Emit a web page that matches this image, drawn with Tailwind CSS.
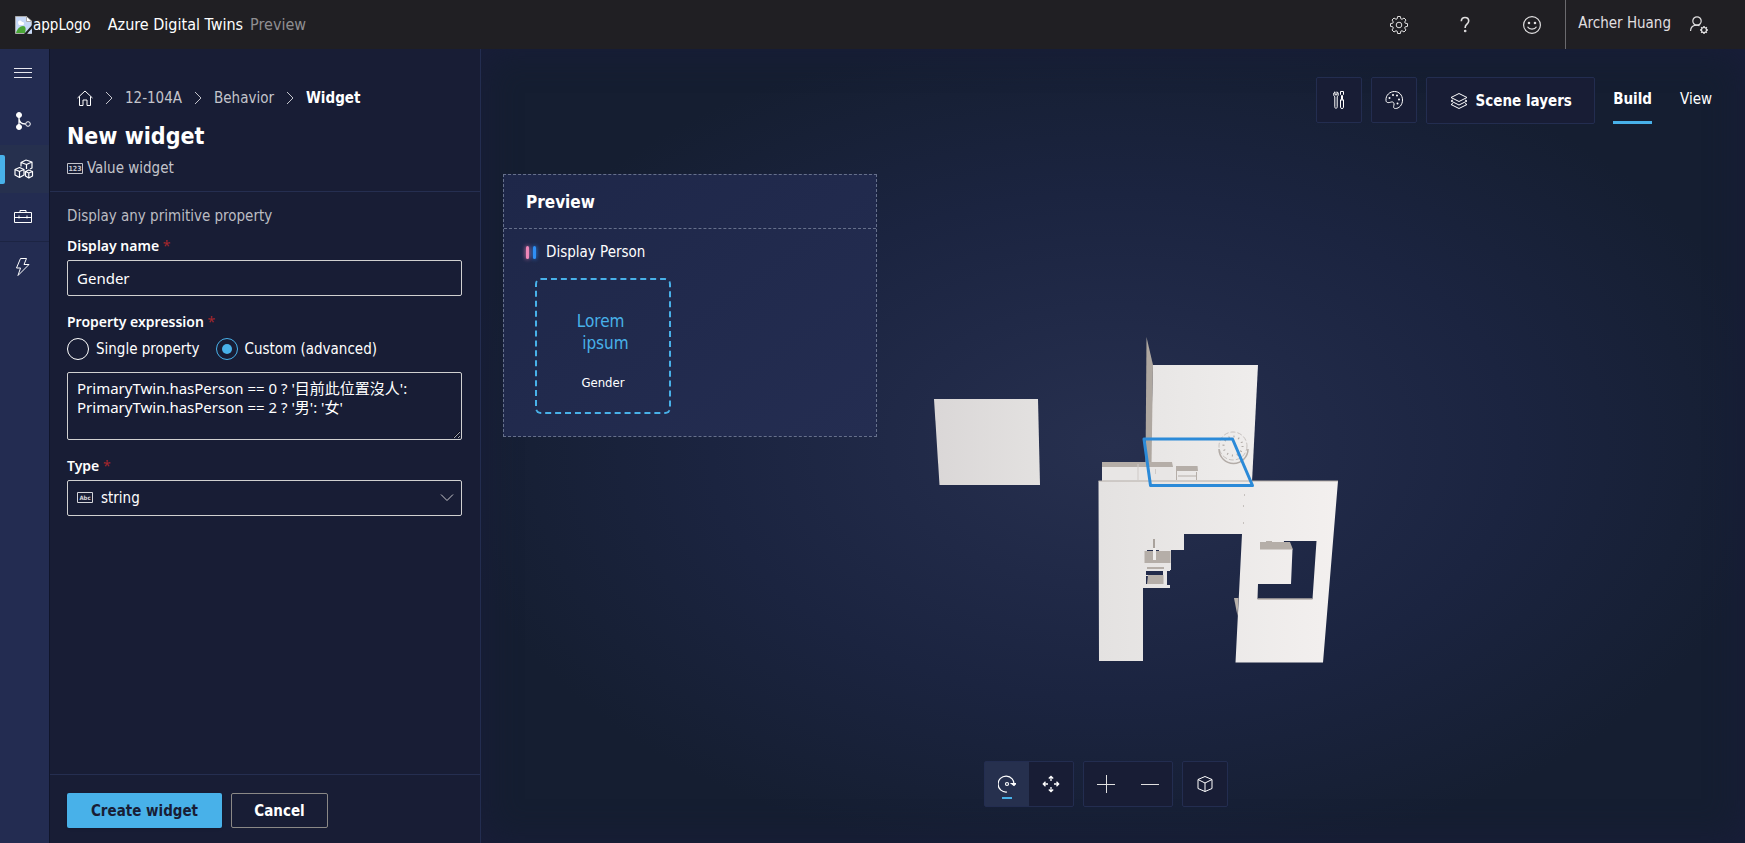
<!DOCTYPE html>
<html lang="en">
<head>
<meta charset="utf-8">
<title>Azure Digital Twins</title>
<script src="https://cdn.jsdelivr.net/npm/@tailwindcss/browser@4"></script>
</head>
<body class="flex h-screen flex-col overflow-hidden bg-[#181d35] font-['DejaVu_Sans_Condensed','Noto_Sans',sans-serif] text-[15px] leading-5 text-white">

<header class="flex h-[49px] shrink-0 items-center bg-[#201f23] pl-[15px]">
  <div class="flex items-center">
    <svg class="size-[18px]" viewBox="0 0 18 18"><path d="M.5.5h11l5 5v12H.5z" fill="#c6d8f7" stroke="#aaa"/><path d="M11.500.5v5h5.500z" fill="#fff" stroke="#aaa"/><path d="M3 7a2 2 0 0 1 4-1 1.500 1.500 0 0 1 1 3H4z" fill="#fff"/><path d="M1 17c1-4 4-7 7-7s3 3 2 7z" fill="#4aa636"/><path d="M9 18 18 8v3l-6 7z" fill="#201f23"/><path d="M13 17.500h4V13z" fill="#c6d8f7"/></svg>
    <span>appLogo</span>
  </div>
  <h1 class="ml-[17px] flex gap-[7px] text-base"><span>Azure Digital Twins</span><span class="text-[#8f8e91]">Preview</span></h1>
  <div class="ml-auto flex h-full items-center text-[#e0dfe0]">
    <button class="grid w-[66px] place-items-center" aria-label="Settings"><svg class="size-5" viewBox="0 0 20 20" fill="none" stroke="currentColor"><circle cx="10" cy="10" r="2.800"/><path d="M8.600 1.500h2.800l.4 2.300 1.200.5 2-1.300 2 2-1.300 2 .5 1.200 2.300.4v2.800l-2.300.4-.5 1.200 1.300 2-2 2-2-1.300-1.200.5-.4 2.300H8.600l-.4-2.300-1.200-.5-2 1.300-2-2 1.300-2-.5-1.200-2.300-.4V8.600l2.300-.4.5-1.200L3 5l2-2 2 1.300 1.200-.5z"/></svg></button>
    <button class="grid w-[66px] place-items-center" aria-label="Help"><svg class="size-5" viewBox="0 0 20 20" fill="none" stroke="currentColor" stroke-width="1.600"><path d="M6.300 6.200c0-2.400 1.600-3.700 3.700-3.700s3.700 1.300 3.700 3.500c0 3-3.500 3.200-3.500 6.200v.8"/><circle cx="10.200" cy="16" r=".5" fill="currentColor"/></svg></button>
    <button class="grid w-[67px] place-items-center" aria-label="Feedback"><svg class="size-5" viewBox="0 0 20 20" fill="none" stroke="currentColor" stroke-width="1.200"><circle cx="10" cy="10" r="8.400"/><path d="M5.500 11.800c1.800 3.200 7.200 3.200 9 0"/><circle cx="7" cy="8" r=".7" fill="currentColor"/><circle cx="13" cy="8" r=".7" fill="currentColor"/></svg></button>
    <button class="flex h-full items-center gap-[18px] border-l border-[#6b6a6e] pr-9 pl-3"><span class="pb-1">Archer Huang</span><svg class="size-5" viewBox="0 0 20 20" fill="none" stroke="currentColor" stroke-width="1.200"><circle cx="8" cy="6" r="4.200"/><path d="M1.500 16c.2-3.500 2.500-5.800 6.500-5.800 1 0 1.800.1 2.500.4"/><circle cx="15" cy="15" r="2.500"/><path d="M15 11v1.500M15 17.500V19M11 15h1.500M17.500 15H19M12.200 12.200l1 1M16.800 16.800l1 1M17.800 12.200l-1 1M13.200 16.800l-1 1" stroke-width="1.500"/></svg></button>
  </div>
</header>

<div class="flex min-h-0 flex-1">
  <nav class="flex w-[50px] shrink-0 flex-col border-r border-[#10152a] bg-[#232c51]" aria-label="Main">
    <button class="grid h-12 w-full place-items-center pr-[3px]" aria-label="Menu"><svg class="size-[18px]" viewBox="0 0 18 18" stroke="#e8e8ee"><path d="M0 4.500h18M0 8.500h18M0 13.500h18"/></svg></button>
    <button class="grid h-12 w-full place-items-center pr-[3px]" aria-label="Twin graph"><svg class="size-[18px]" viewBox="0 0 18 18" fill="none" stroke="#fff"><circle cx="5" cy="3" r="2.500" fill="#fff"/><circle cx="5" cy="15" r="2.500" fill="#fff"/><circle cx="14" cy="12" r="2.300"/><path d="M5 3v12M5 6c0 4 2 6 6.500 6" stroke-width="1.300"/></svg></button>
    <button class="flex h-12 w-full items-center gap-[9px] bg-[#26304e]" aria-label="3D scenes"><span class="h-[29px] w-[5px] rounded-r-xs bg-[#48b1e9]"></span><svg class="size-5" viewBox="0 0 20 20" fill="none" stroke="#fff" stroke-width="1.200" stroke-linejoin="round"><path d="m12 1 6 2v6l-2 1M12 1 7 3.500v4M7 3.500l5.500 2L18 3M12.500 5.500V10M5.500 8.500 1 10.500v5.500l4.500 2.500 4.500-2.500v-5.500zM1 10.500l4.500 2 4.500-2M5.500 12.500v6M14.800 11l-3.300 1.500v4.500l3.300 2 3.700-2v-4.500zM11.500 12.500l3.300 1.500 3.700-1.500M14.800 14v5"/></svg></button>
    <button class="grid h-[49px] w-full place-items-center border-b border-[#1c2443] pr-[3px]" aria-label="Toolbox"><svg class="size-[18px]" viewBox="0 0 18 18" fill="none" stroke="#fff"><path d="M.5 4.500h17v10H.5zM6 4.500v-2h6v2M.5 9.500h17M5 7.500v3M13 7.500v3"/></svg></button>
    <button class="grid h-[50px] w-full place-items-center pr-[3px]" aria-label="Actions"><svg class="size-[18px]" viewBox="0 0 18 18" fill="none" stroke="#fff" stroke-linejoin="round"><path d="M6.500.5h6l-2.500 6h5l-11 11 2.500-7.500H2.500z"/></svg></button>
  </nav>

  <main class="flex w-[431px] shrink-0 flex-col border-r border-[#232d50]">
    <div class="border-b border-[#252e50] px-[17px] pt-[39px] pb-[13px]">
      <nav class="flex items-center gap-3 pl-[10px] text-[#c3c4cb]" aria-label="Breadcrumb">
        <a href="#" aria-label="Home"><svg class="size-4" viewBox="0 0 16 16" fill="none" stroke="#fff" stroke-linejoin="round"><path d="M.5 8 8 1l7.500 7M2.500 6.500v9H6V10h4v5.500h3.500v-9"/></svg></a>
        <svg class="h-3 w-2" viewBox="0 0 8 12" fill="none" stroke="currentColor"><path d="m1 0 6 6-6 6"/></svg>
        <a href="#">12-104A</a>
        <svg class="h-3 w-2" viewBox="0 0 8 12" fill="none" stroke="currentColor"><path d="m1 0 6 6-6 6"/></svg>
        <a href="#">Behavior</a>
        <svg class="h-3 w-2" viewBox="0 0 8 12" fill="none" stroke="currentColor"><path d="m1 0 6 6-6 6"/></svg>
        <span class="font-bold text-white">Widget</span>
      </nav>
      <h2 class="mt-3 text-[23px] leading-8 font-bold">New widget</h2>
      <p class="mt-[6px] flex items-center gap-1 text-[#c3c4cb]"><svg class="h-[11px] w-4" viewBox="0 0 16 11" fill="none" stroke="currentColor"><path d="M.5.5h15v10H.5z"/><text x="8" y="8" text-anchor="middle" font-size="7" font-weight="700" fill="currentColor" stroke="none">123</text></svg>Value widget</p>
    </div>

    <form class="flex flex-1 flex-col pt-[14px] pr-[18px] pl-[17px]">
      <p class="text-[#bbbcc2]">Display any primitive property</p>
      <label for="name" class="mt-[10px] font-['Noto_Sans'] text-sm font-semibold">Display name <span class="font-normal text-[#a4262c]">*</span></label>
      <input id="name" value="Gender" class="mt-1 h-9 rounded-xs border border-[#d0d0d0] bg-transparent px-[9px] font-['Noto_Sans'] text-[15px] outline-none">
      <fieldset class="mt-4">
        <legend class="font-['Noto_Sans'] text-sm font-semibold">Property expression <span class="font-normal text-[#a4262c]">*</span></legend>
        <div class="mt-[6px] flex gap-4">
          <label class="flex items-center gap-[7px]"><input type="radio" name="mode" class="size-[22px] appearance-none rounded-full border border-white"><span>Single property</span></label>
          <label class="flex items-center gap-[7px]"><input type="radio" name="mode" checked class="size-[22px] appearance-none rounded-full border border-[#48b1e9] bg-[#48b1e9] bg-clip-content p-[5px]"><span>Custom (advanced)</span></label>
        </div>
      </fieldset>
      <textarea aria-label="Property expression" class="mt-3 h-[68px] rounded-xs border border-[#d0d0d0] bg-transparent px-[9px] py-[6px] font-['Noto_Sans','Noto_Sans_CJK_TC',sans-serif] text-[15px] leading-[19px] outline-none">PrimaryTwin.hasPerson == 0 ? '目前此位置沒人':
PrimaryTwin.hasPerson == 2 ? '男': '女'</textarea>
      <label for="type" class="mt-4 font-['Noto_Sans'] text-sm font-semibold">Type <span class="font-normal text-[#a4262c]">*</span></label>
      <div class="relative mt-1">
        <select id="type" class="h-9 w-full appearance-none rounded-xs border border-[#d0d0d0] bg-transparent pl-[33px] text-[15px] outline-none"><option>string</option></select>
        <svg class="pointer-events-none absolute top-3 left-[10px] h-[11px] w-4" viewBox="0 0 16 11" fill="none" stroke="#d5d5da"><path d="M.5.500h15v10H.5z"/><text x="8" y="8" text-anchor="middle" font-size="6" font-weight="700" fill="#d5d5da" stroke="none">Abc</text></svg>
        <svg class="pointer-events-none absolute top-[14px] right-2 h-2 w-[14px]" viewBox="0 0 14 8" fill="none" stroke="#c8c8cc"><path d="m1 .500 6 6 6-6"/></svg>
      </div>
    </form>

    <footer class="flex h-[69px] gap-[9px] border-t border-[#252e50] px-[17px] pt-[18px]">
      <button class="h-[35px] w-[155px] rounded-xs bg-[#48b1e9] font-bold text-[#181d35] shadow">Create widget</button>
      <button class="h-[35px] w-[97px] rounded-xs border border-[#8a8886] font-bold">Cancel</button>
    </footer>
  </main>

  <section class="relative flex min-w-0 flex-1 flex-col bg-[radial-gradient(ellipse_at_center,#27304f_0%,#202947_25%,#1b2440_45%,#151e31_75%,#151e31_100%)] shadow-[inset_0_0_36px_#191d3a]">
    <svg class="absolute inset-0 size-full" viewBox="481 49 1264 794" role="img" aria-label="3D scene">
      <defs>
        <linearGradient id="g1"><stop stop-color="#dad7d7"/><stop offset="1" stop-color="#e3e1e0"/></linearGradient>
        <linearGradient id="g2"><stop stop-color="#e4e2e1"/><stop offset="1" stop-color="#f3f0ef"/></linearGradient>
        <linearGradient id="g3"><stop stop-color="#e8e6e5"/><stop offset="1" stop-color="#efedec"/></linearGradient>
      </defs>
      <path d="M934 399h104l2 86H939.500z" fill="url(#g1)"/>
      <path d="M1153 365h105l-6 117h-102z" fill="url(#g3)"/>
      <path d="m1146.500 337 6.500 28-1.500 100h-6z" fill="#aea7a0"/>
      <path d="M1102 467h71v14h-71z" fill="#e8e6e5"/>
      <path d="M1102 462h70l1 5h-71z" fill="#b5aea8"/>
      <path d="M1138 464v16M1155.500 469v5" stroke="#cfcac7"/>
      <path d="M1176 466h21.500l.5 5h-22z" fill="#b5aea8"/>
      <path d="M1176.500 471v9M1178 476h19M1196.500 472v8" stroke="#b5aea8" fill="none"/>
      <g fill="none" stroke="#c6c1be"><circle cx="1233" cy="446" r="14" stroke-dasharray="5 2"/><path d="M1219 449a14 14 0 0 0 29 0" stroke="#b3aca7" stroke-width="1.500"/><circle cx="1233" cy="446" r="9.500" stroke="#a9a39f" stroke-width="2" stroke-dasharray="1 4"/></g>
      <path fill-rule="evenodd" d="M1098.500 481H1338l-15 181.500h-87.500l6.500-128.500h-58v16h-13v20h-1v18h-27v73h-44zM1284 541l-1 8h9.500l-1.500 35h-33l-.5 15h55l4-58z" fill="url(#g2)"/>
      <path d="M1098.500 481H1338" stroke="#b5aea8"/>
      <path d="M1257.500 599h55" stroke="#b5aea8" stroke-width="1.500"/>
      <path d="M1234 598h4.500l-1 18z" fill="#b8b1ab"/>
      <path d="M1260 542h6v-1h6v1h18l3 7.500h-33z" fill="#b5aea8"/>
      <path d="M1146 571h17v4h-17zM1146 576h2v8h-2zM1167 571h3v14h-3z" fill="#222b4b"/>
      <path d="M1144.500 551h26v12h-26zM1147 567h17v2h-17zM1148 575h15.500v9H1147z" fill="#b5aea8"/>
      <path d="M1147 550.500h12" stroke="#222b4b"/>
      <path d="M1153 539h2v9h-2z" fill="#a9a29c"/><path d="M1153 548h3v12h-3z" fill="#efedec"/>
      <path d="M1244.500 494v2M1243.500 505v2M1243.500 522v2" stroke="#c6c1be"/>
      <path d="M1144 439h88.500l20 46.500h-102z" fill="none" stroke="#2b8ad8" stroke-width="3" stroke-linejoin="round"/>
    </svg>

    <div class="relative flex justify-end gap-[9px] pt-7 pr-[25px]">
      <button class="grid size-[46px] place-items-center rounded-xs border border-[#232d50] bg-[#181d35]" aria-label="Tools"><svg class="h-[18px] w-3" viewBox="0 0 12 18" fill="none" stroke="#fff"><path d="M2 .8v3h2v-3c2 1 1.500 4 .2 5v10c0 2-2.400 2-2.400 0v-10C.3 4.800 0 1.800 2 .8zM7.500.5h3v3l-1 1v4h-1v-4l-1-1zM7 9h4M7.500 9v7.500c0 1.300 3 1.300 3 0V9"/></svg></button>
      <button class="grid size-[46px] place-items-center rounded-xs border border-[#232d50] bg-[#181d35]" aria-label="Theme"><svg class="size-[18px]" viewBox="0 0 18 18" fill="none" stroke="#fff"><path d="M1 9.500C.5 4 5 .5 9.500.5s8 3.500 8 8.500-3.500 8.500-7 8.500c-2.500 0-2-2-1.500-3.500.5-2-1-3.500-2.700-3-1.800.6-5 1.500-5.300-1.500z"/><g fill="#fff" stroke="none"><circle cx="4.500" cy="7" r="1"/><circle cx="8" cy="4" r="1"/><circle cx="12" cy="4.500" r="1"/><circle cx="14" cy="8.500" r="1"/><circle cx="12.500" cy="12.500" r="1"/></g></svg></button>
      <button class="flex h-[47px] w-[169px] items-center justify-center gap-2 rounded-xs border border-[#232d50] bg-[#181d35] font-bold"><svg class="size-[18px]" viewBox="0 0 18 18" fill="none" stroke="#fff" stroke-linejoin="round"><path d="m9 1.500 8 4-8 4-8-4zM3 8 1 9l8 4 8-4-2-1M3 11.500l-2 1 8 4 8-4-2-1"/></svg>Scene layers</button>
      <div class="ml-[9px] flex h-[47px] gap-5" role="tablist">
        <button role="tab" aria-selected="true" class="h-full border-b-3 border-[#48b1e9] font-bold">Build</button>
        <button role="tab" aria-selected="false" class="h-full border-b-3 border-transparent px-2">View</button>
      </div>
    </div>

    <aside class="relative mt-[50px] ml-[22px] h-[263px] w-[374px] border border-dashed border-[#66708b] bg-linear-to-br from-[#1e2749] to-[#242d51]">
      <h3 class="flex h-[54px] items-center border-b border-dashed border-[#66708b] px-[22px] text-[17px] font-bold">Preview</h3>
      <div class="mt-[13px] ml-[22px] flex items-center gap-[10px]"><span class="flex gap-1"><i class="h-[13px] w-[3px] rounded-xs bg-[#f087b8] shadow-[0_0_4px_#f087b8]"></i><i class="h-[13px] w-[3px] rounded-xs bg-[#2f8ff5] shadow-[0_0_4px_#2f8ff5]"></i></span>Display Person</div>
      <div class="mt-[16px] ml-[31px] flex size-[136px] flex-col items-center rounded-md border-2 border-dashed border-[#48b1e9] pt-[30px]">
        <p class="text-center text-[17px] leading-[22px] whitespace-pre text-[#48b1e9]">Lorem 
 ipsum</p>
        <p class="mt-[19px] text-[13px]">Gender</p>
      </div>
    </aside>

    <div class="relative mt-auto mr-[14px] mb-9 flex justify-center gap-[9px]">
      <div class="flex h-[46px] rounded-xs border border-[#232d50] bg-[#181d35]">
        <button class="relative grid w-11 place-items-center bg-[#26304e]" aria-label="Orbit"><svg class="size-[18px]" viewBox="0 0 18 18" fill="none" stroke="#fff" stroke-width="1.200"><path d="M9 17a8 8 0 1 1 7-7"/><path d="m13.500 8.500 2.500 2 2-2z" fill="#fff"/><circle cx="9" cy="9" r="1.500"/></svg><span class="absolute bottom-[7px] h-[2px] w-[10px] bg-[#48b1e9]"></span></button>
        <button class="grid w-11 place-items-center" aria-label="Pan"><svg class="size-[18px]" viewBox="0 0 18 18" fill="none" stroke="#fff" stroke-width="1.300"><path d="M9 6V1.500M6.800 3.500 9 1.300l2.200 2.200M9 12v4.500M6.800 14.500 9 16.700l2.200-2.200M6 9H1.500M3.500 6.800 1.300 9l2.200 2.200M12 9h4.500M14.500 6.800 16.700 9l-2.200 2.200"/></svg></button>
      </div>
      <div class="flex h-[46px] rounded-xs border border-[#232d50] bg-[#181d35]">
        <button class="grid w-11 place-items-center" aria-label="Zoom in"><svg class="size-[18px]" viewBox="0 0 18 18" stroke="#e0e0e0"><path d="M0 9.500h18M9.500 0v18"/></svg></button>
        <button class="grid w-11 place-items-center" aria-label="Zoom out"><svg class="size-[18px]" viewBox="0 0 18 18" stroke="#e0e0e0"><path d="M0 9.500h18"/></svg></button>
      </div>
      <button class="grid size-[46px] place-items-center rounded-xs border border-[#232d50] bg-[#181d35]" aria-label="Reset camera"><svg class="size-4" viewBox="0 0 16 16" fill="none" stroke="#fff" stroke-linejoin="round"><path d="m8 .5 7 3v9l-7 3-7-3v-9zM1 3.500l7 3.500 7-3.500M8 7v8.500"/></svg></button>
    </div>
  </section>
</div>
</body>
</html>
